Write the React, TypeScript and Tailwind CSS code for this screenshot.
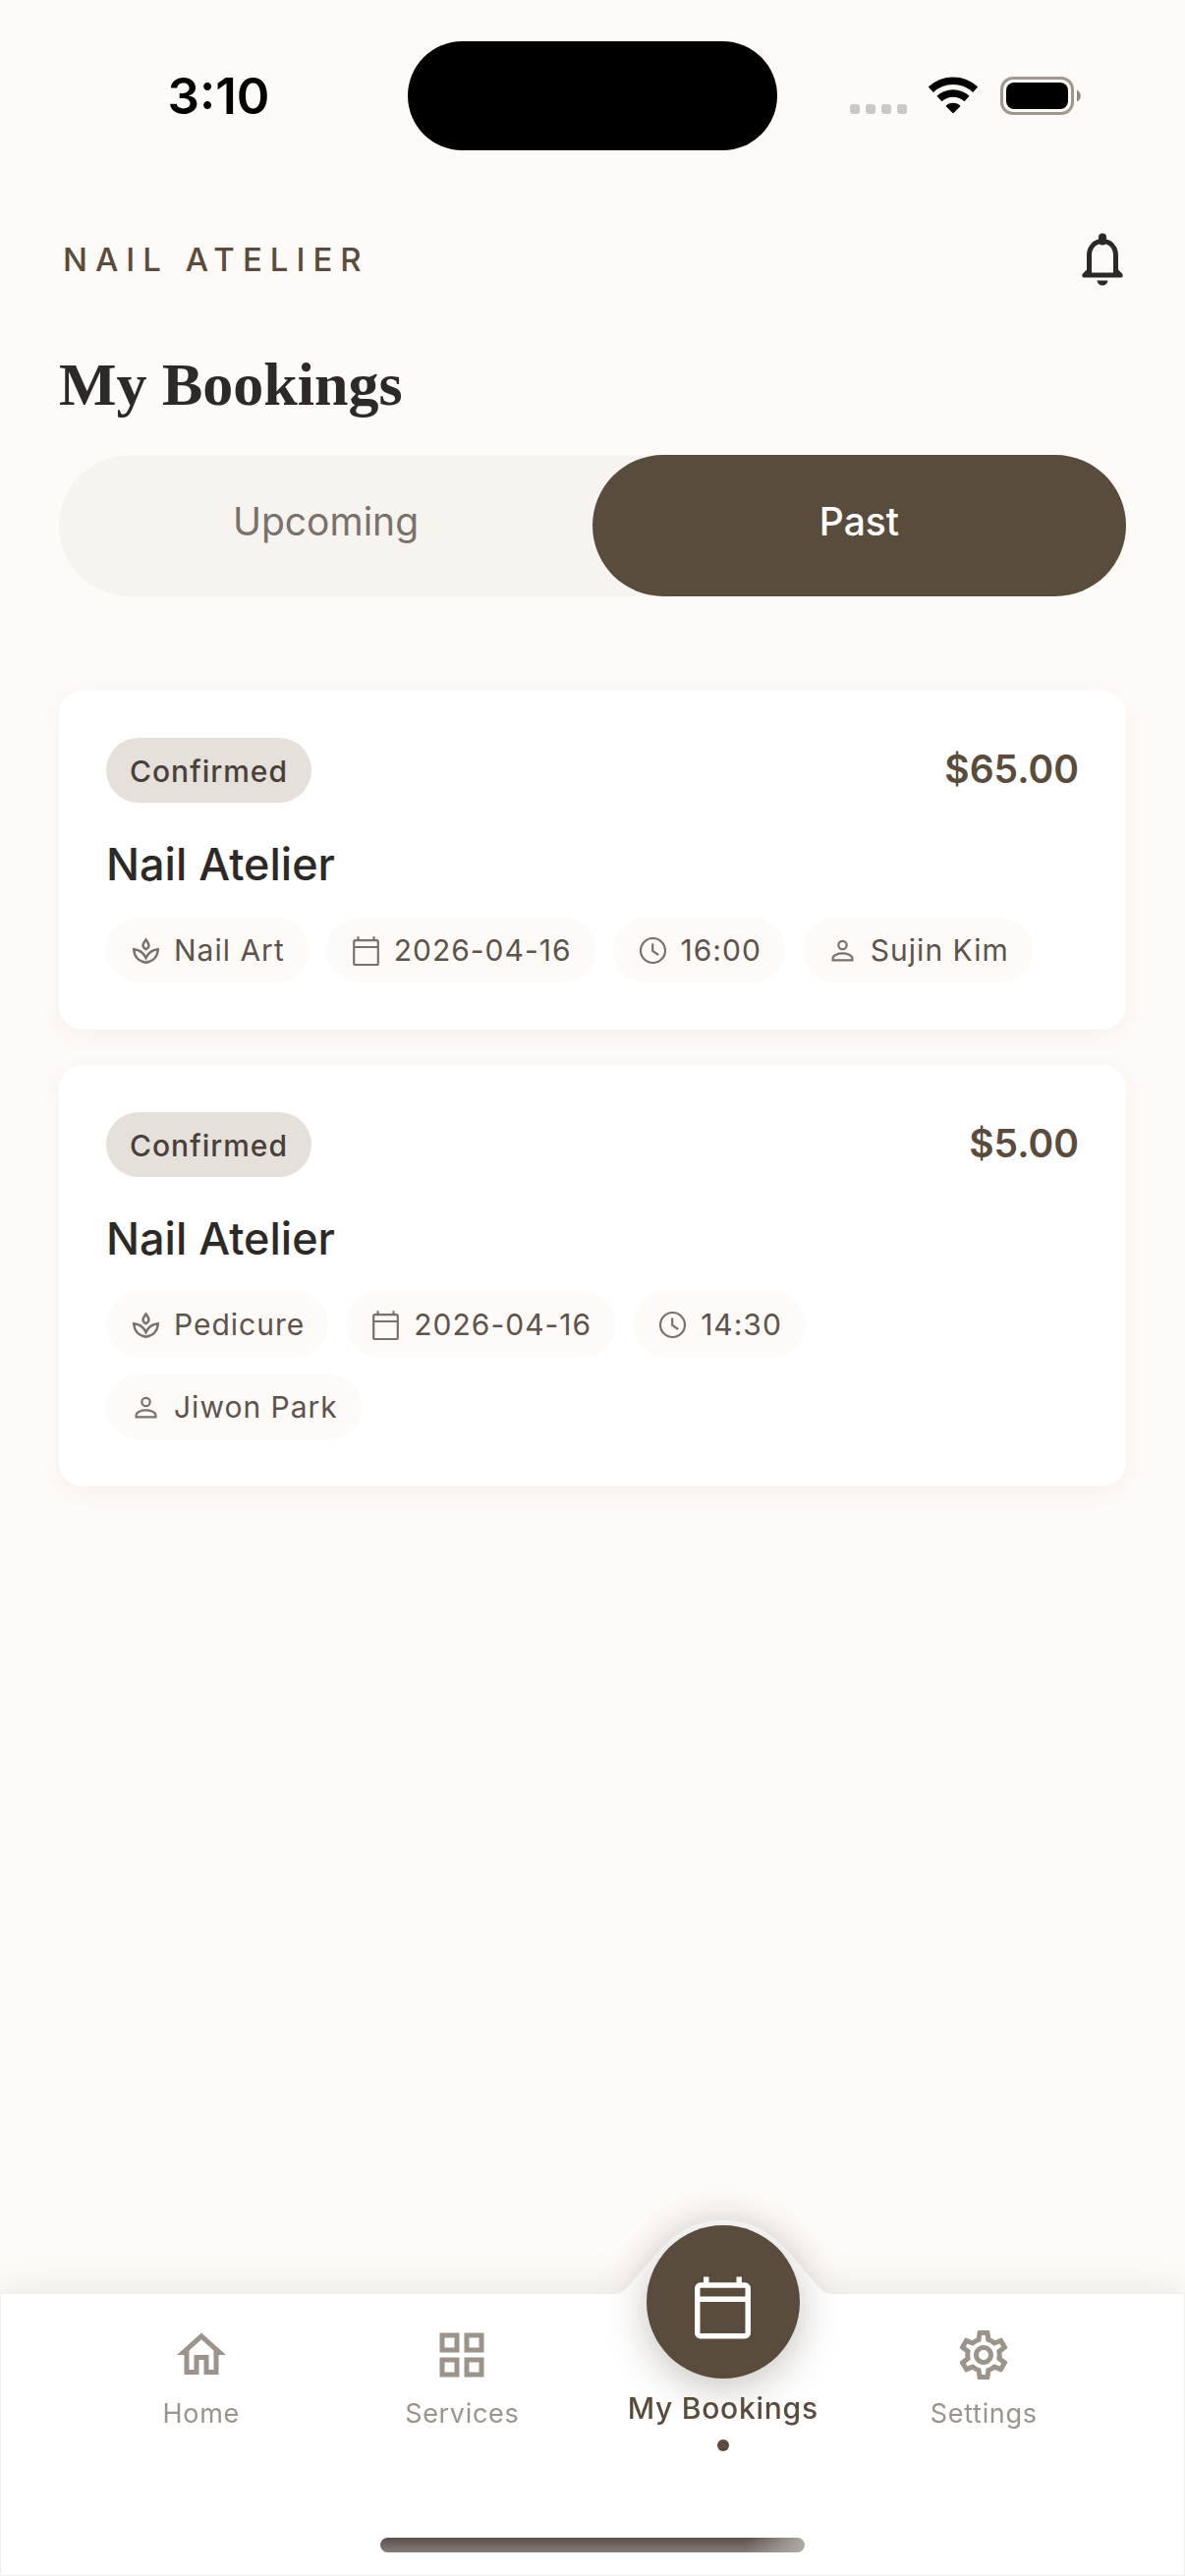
import { useState } from 'react';
import type { ReactNode } from 'react';
import { MdOutlineHome, MdOutlineGridView, MdOutlineSettings } from 'react-icons/md';

interface Booking {
  id: number;
  status: string;
  price: string;
  salon: string;
  service: string;
  date: string;
  time: string;
  artist: string;
}

const bookings: Booking[] = [
  {
    id: 1,
    status: 'Confirmed',
    price: '$65.00',
    salon: 'Nail Atelier',
    service: 'Nail Art',
    date: '2026-04-16',
    time: '16:00',
    artist: 'Sujin Kim',
  },
  {
    id: 2,
    status: 'Confirmed',
    price: '$5.00',
    salon: 'Nail Atelier',
    service: 'Pedicure',
    date: '2026-04-16',
    time: '14:30',
    artist: 'Jiwon Park',
  },
];

const chipIcon = 'size-[33px] shrink-0 text-[#7a716b]';

function SpaIcon() {
  return (
    <svg viewBox="0 0 33 33" className={chipIcon} fill="none" stroke="currentColor" strokeWidth="2.4">
      <path d="M16.5 5.500c-2 2.600-3 4.200-3 6 0 1.400 1.200 2.700 3 3.800 1.800-1.100 3-2.400 3-3.800 0-1.800-1-3.400-3-6z" />
      <path d="M4.200 15.200c.4 7.300 4.300 12 12.300 13.600 8-1.600 11.900-6.300 12.300-13.600-5.800.6-10 3.600-12.300 8.800-2.300-5.200-6.500-8.200-12.300-8.800z" />
    </svg>
  );
}

function CalendarIcon({ className, strokeWidth = 2.2 }: { className: string; strokeWidth?: number }) {
  return (
    <svg viewBox="0 0 33 33" className={className} fill="none" stroke="currentColor" strokeWidth={strokeWidth}>
      <rect x="4.200" y="6.200" width="24.600" height="24.800" rx="1.500" />
      <path d="M4 13h25M8.500 2.200v4M24.500 2.200v4" />
    </svg>
  );
}

function ClockIcon() {
  return (
    <svg viewBox="0 0 33 33" className={chipIcon} fill="none" stroke="currentColor" strokeWidth="2.200">
      <circle cx="16.500" cy="16.500" r="12.500" />
      <path d="M16.200 9.500v7.500l6 4" />
    </svg>
  );
}

function PersonIcon() {
  return (
    <svg viewBox="0 0 33 33" className={chipIcon} fill="none" stroke="currentColor" strokeWidth="2.200">
      <circle cx="16.500" cy="11" r="4.200" />
      <path d="M6.600 26.400v-2c0-3.200 5.400-5 9.900-5s9.900 1.800 9.900 5v2z" />
    </svg>
  );
}

function BellIcon() {
  return (
    <svg viewBox="0 0 42 54" className="h-[54px] w-[42px]" fill="none">
      <path
        d="M7.500 42V23C7.500 14 13.500 8.500 21 8.500S34.500 14 34.500 23v19"
        stroke="currentColor"
        strokeWidth="5"
      />
      <path d="M21 4.500v4" stroke="currentColor" strokeWidth="8" strokeLinecap="round" />
      <path d="M5 37.500 1 41.500c-1.500 2-.5 4 1.500 4h37c2 0 3-2 1.500-4l-4-4v3H5z" fill="currentColor" />
      <path d="M15.500 48.500h11c-.3 3-2.800 5-5.500 5s-5.200-2-5.500-5z" fill="currentColor" />
    </svg>
  );
}

function StatusBar() {
  return (
    <div className="grid h-[194px] grid-cols-[1fr_376px_1fr] items-center">
      <span className="ml-[30px] justify-self-center text-[51px] leading-none font-semibold text-black">3:10</span>
      <div className="h-[111px] rounded-full bg-black" />
      <div className="ml-[74px] flex items-center">
        <div className="flex gap-[6px] pt-7">
          {[0, 1, 2, 3].map((dot) => (
            <span key={dot} className="size-[10px] rounded-[3px] bg-[#cac7c4]" />
          ))}
        </div>
        <svg viewBox="0 0 50 38" className="ml-[22px] h-[38px] w-[50px]" fill="none" stroke="#000">
          <path d="M2.300 13.200a33 33 0 0 1 45.400 0" strokeWidth="7.500" />
          <path d="M11 22.500a20.500 20.500 0 0 1 28 0" strokeWidth="7.500" />
          <path d="M25 37.500 17.500 30c4-4.300 11-4.300 15 0z" fill="#000" stroke="none" />
        </svg>
        <svg viewBox="0 0 82 39" className="ml-[23px] h-[39px] w-[82px]" fill="none">
          <rect x="1.500" y="1.500" width="72" height="36" rx="11.500" stroke="#a0988f" strokeWidth="3" />
          <rect x="6" y="6" width="63" height="27" rx="8" fill="#000" />
          <path d="M78 13.500c5 2.500 5 10 0 12z" fill="#8c8681" />
        </svg>
      </div>
    </div>
  );
}

function Chip({ icon, label }: { icon: ReactNode; label: string }) {
  return (
    <li className="flex h-[66px] items-center gap-3 rounded-full bg-[#fefaf7] px-6">
      {icon}
      <span className="text-[30px] leading-none tracking-[1px] text-[#5c534d]">{label}</span>
    </li>
  );
}

function BookingCard({ booking }: { booking: Booking }) {
  return (
    <article className="rounded-3xl bg-white p-12 shadow-[0_6px_24px_rgba(90,76,60,0.05)]">
      <div className="flex h-[66px] items-center justify-between">
        <span className="flex h-full items-center rounded-full bg-[#e5e0da] px-6 pt-[2px] text-[30px] leading-none font-medium tracking-[1px] text-[#4a3f3a]">
          {booking.status}
        </span>
        <span className="pb-1 text-[39px] leading-none font-semibold text-[#5a4c3c]">{booking.price}</span>
      </div>
      <h2 className="mt-7 mb-5 text-[45px] leading-[69px] font-medium text-[#2d2926]">{booking.salon}</h2>
      <ul className="flex flex-wrap gap-[18px] pr-6">
        <Chip icon={<SpaIcon />} label={booking.service} />
        <Chip icon={<CalendarIcon className={chipIcon} />} label={booking.date} />
        <Chip icon={<ClockIcon />} label={booking.time} />
        <Chip icon={<PersonIcon />} label={booking.artist} />
      </ul>
    </article>
  );
}

function NavItem({ icon, label }: { icon: ReactNode; label: string }) {
  return (
    <a href="#" className="flex flex-col items-center pt-[33px] text-[#9c938b]">
      {icon}
      <span className="mt-3 text-[27px] leading-9 tracking-wide">{label}</span>
    </a>
  );
}

function BottomNav() {
  return (
    <nav className="relative h-72">
      {/* White surface with the raised hump behind the active tab */}
      <div className="absolute inset-0 border border-[#f0eeec] bg-white drop-shadow-[0_-6px_18px_rgba(60,50,40,0.09)]">
        <div className="grid grid-cols-4 px-18">
          <svg viewBox="0 0 224 80" className="col-start-3 -mt-[75px] h-20 w-56 justify-self-center">
            <path
              d="M0 75C9 75 13 70 18 64L50 27C70 7 90 0 112 0s42 7 62 27l32 37c5 6 9 11 18 11v5H0z"
              fill="#fff"
            />
          </svg>
        </div>
      </div>
      <div className="relative grid grid-cols-4 px-18">
        <NavItem icon={<MdOutlineHome className="size-[60px]" />} label="Home" />
        <NavItem icon={<MdOutlineGridView className="size-[60px]" />} label="Services" />
        <a href="#" aria-current="page" className="-mt-[69px] flex flex-col items-center text-[#5a4c3c]">
          <span className="flex size-39 items-center justify-center rounded-full bg-[#5a4c3c] pt-2 shadow-[0_9px_42px_rgba(80,68,54,0.32)]">
            <CalendarIcon className="size-[69px] text-white" strokeWidth={2.6} />
          </span>
          <span className="mt-[10px] text-[30px] leading-10 font-medium tracking-wide whitespace-nowrap">
            My Bookings
          </span>
          <span className="mt-3 size-3 rounded-full bg-[#5a4c3c]" />
        </a>
        <NavItem icon={<MdOutlineSettings className="size-[60px]" />} label="Settings" />
      </div>
      <div className="absolute bottom-6 left-1/2 h-[15px] w-[432px] -translate-x-1/2 rounded-full bg-[linear-gradient(100deg,transparent_86%,#b3aca5),linear-gradient(#5a504b,#857c77)]" />
    </nav>
  );
}

export default function App() {
  const [tab, setTab] = useState('Past');

  return (
    <div className="flex min-h-screen flex-col bg-[#fefaf7] font-[Inter,sans-serif]">
      <StatusBar />
      <header className="flex items-center justify-between px-[60px] pt-[43px]">
        <span className="pl-1 text-[33px] leading-[54px] font-medium tracking-[8px] text-[#5a4c3c]">NAIL ATELIER</span>
        <button type="button" aria-label="Notifications" className="mr-[3px] text-[#2d2926]">
          <BellIcon />
        </button>
      </header>
      <main className="flex-1 px-[60px]">
        <h1 className="mt-16 font-['Liberation_Serif',serif] text-[62px] leading-[72px] font-bold text-[#2d2926]">
          My Bookings
        </h1>
        <div role="tablist" className="mt-9 grid grid-cols-2 rounded-full bg-[#f7f4f0]">
          {['Upcoming', 'Past'].map((name) => (
            <button
              key={name}
              type="button"
              role="tab"
              aria-selected={tab === name}
              onClick={() => setTab(name)}
              className={`h-36 rounded-full pb-2 text-[39px] ${
                tab === name ? 'bg-[#5a4c3c] font-medium text-white' : 'text-[#7a716b]'
              }`}
            >
              {name}
            </button>
          ))}
        </div>
        <div className="mt-24 flex flex-col gap-9">
          {bookings.map((booking) => (
            <BookingCard key={booking.id} booking={booking} />
          ))}
        </div>
      </main>
      <BottomNav />
    </div>
  );
}
